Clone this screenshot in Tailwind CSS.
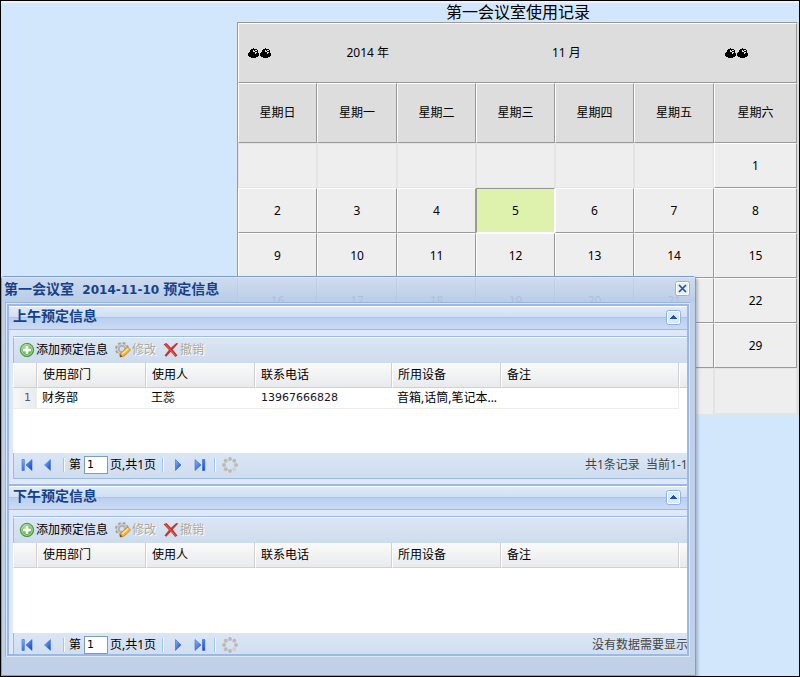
<!DOCTYPE html>
<html lang="zh-CN">
<head>
<meta charset="utf-8">
<title>第一会议室使用记录</title>
<script src="https://cdn.jsdelivr.net/npm/@tailwindcss/browser@4"></script>
</head>
<body class="min-h-screen bg-black p-px text-[12px] leading-[16px] text-black font-['Noto_Sans','Noto_Sans_CJK_SC',sans-serif]">
<svg width="0" height="0" class="absolute" aria-hidden="true">
  <defs>
    <linearGradient id="arrow" x1="0" y1="0" x2="1" y2="1"><stop offset="0" stop-color="#8fb8ff"/><stop offset="1" stop-color="#0a3fc4"/></linearGradient>
    <radialGradient id="green" cx=".4" cy=".3" r=".8"><stop offset="0" stop-color="#a5dd8c"/><stop offset="1" stop-color="#3c9a2e"/></radialGradient>
    <symbol id="bag" viewBox="0 0 11 10"><path d="M5 0h1v1h3v1h1v3h1v3h-1v1H8v1H3V9H1V8H0V5h1V4h1V2h1V1h2z"/><path d="M5 2h1v1H5zM7 2h2v1H7zM5 3h2v1H5zM7 4h2v1H7zM7 5h1v1H7z" fill="#ddd"/></symbol>
    <symbol id="add" viewBox="0 0 16 16"><circle cx="8" cy="8" r="6.7" fill="url(#green)" stroke="#4d9a44"/><circle cx="8" cy="8" r="5.3" fill="none" stroke="#b9e2ab" stroke-width=".8"/><path d="M6.700 4h2.600v2.700H12v2.600H9.300V12H6.700V9.300H4V6.700h2.700z" fill="#fff"/></symbol>
    <symbol id="edit" viewBox="0 0 16 16"><circle cx="7" cy="7" r="6" fill="none" stroke="#a2a29e" stroke-width="2" stroke-dasharray="2.700 2.010"/><circle cx="7" cy="7" r="3.900" fill="none" stroke="#b0b0ac" stroke-width="3.200"/><circle cx="7" cy="7" r="4.500" fill="none" stroke="#d8d8d3" stroke-width="1"/><path d="M5 15l.8-4.200 6.700-5.800 3.100 3.100-6.600 6z" fill="#f4b43e" stroke="#c9822b" stroke-width=".8"/><path d="M7.300 11.800l6-5.200" stroke="#ffe6a1" stroke-width="1.300"/><path d="M5 15l.5-2.400 1.900 1.800z" fill="#6b431d"/></symbol>
    <symbol id="cancel" viewBox="0 0 16 16"><path d="M.5 2.200L3.500 1 8 5.700 13.300 1l2 .4L9.700 7.500l4.800 6-2.200 1.500L7.800 9.800l-4.500 5L1.500 13.500 5.900 8z" fill="#cb3426"/><path d="M2.500 2.500l9.800 11" stroke="#e76b58" stroke-width=".9"/></symbol>
    <symbol id="prev" viewBox="0 0 16 16"><path d="M10.500 2.500v11L4.500 8z" fill="url(#arrow)" stroke="#4a79e0" stroke-width=".6"/></symbol>
    <symbol id="first" viewBox="0 0 16 16"><path d="M3 2.500h2.300v11H3zM13 2.500v11L7 8z" fill="url(#arrow)" stroke="#2f66d8" stroke-width=".6"/></symbol>
    <symbol id="next" viewBox="0 0 16 16"><path d="M5.500 2.500v11l5.500-5.500z" fill="url(#arrow)" stroke="#2f66d8" stroke-width=".6"/></symbol>
    <symbol id="last" viewBox="0 0 16 16"><path d="M10.500 2.500h2.300v11h-2.300zM3 2.500v11L9 8z" fill="url(#arrow)" stroke="#2f66d8" stroke-width=".6"/></symbol>
    <symbol id="refresh" viewBox="0 0 16 16"><g fill="#bdbbb6"><circle cx="8" cy="2" r="2"/><circle cx="12.300" cy="3.700" r="2"/><circle cx="14" cy="8" r="2"/><circle cx="12.300" cy="12.300" r="2" fill="#d2cfc9"/><circle cx="8" cy="14" r="2"/><circle cx="3.700" cy="12.300" r="2"/><circle cx="2" cy="8" r="2"/><circle cx="3.700" cy="3.700" r="2"/></g></symbol>
    <symbol id="up" viewBox="0 0 15 15"><rect x=".5" y=".5" width="14" height="14" rx="2" fill="#fff" stroke="#8db2e3"/><rect x="2" y="2" width="11" height="11" fill="#d9ebfb"/><path d="M4 9V8h1V7h1V6h1V5h1v1h1v1h1v1h1v1z" fill="#234eac"/></symbol>
    <symbol id="close" viewBox="0 0 15 15"><rect x=".5" y=".5" width="14" height="14" rx="2" fill="#fff" stroke="#8db2e3"/><rect x="2" y="2" width="11" height="11" fill="#e3effb"/><path d="M4 4l7 7M11 4l-7 7" stroke="#2c4fa3" stroke-width="1.700"/></symbol>
  </defs>
</svg>
<main class="relative min-h-[675px] overflow-hidden border-t-2 border-[#eef0fb] bg-[#d3e7fc]">
  <section class="ml-[236px]">
    <h1 class="h-[19px] text-center text-[16px] leading-[18px]">第一会议室使用记录</h1>
    <div class="border-r-2 border-[#dedede]">
    <table class="w-full table-fixed border-separate border-spacing-0 border-l border-t border-[#999] bg-[#eee] text-center [&_td]:border [&_td]:border-t-white [&_td]:border-l-white [&_td]:border-r-[#999] [&_td]:border-b-[#999] [&_td]:p-0 [&_th]:border [&_th]:border-t-white [&_th]:border-l-white [&_th]:border-r-[#999] [&_th]:border-b-[#999] [&_th]:bg-[#ddd] [&_th]:p-0 [&_th]:font-normal">
      <colgroup><col class="w-[79px]"><col class="w-[80px]"><col class="w-[79px]"><col class="w-[79px]"><col class="w-[79px]"><col class="w-[80px]"><col class="w-[83px]"></colgroup>
      <thead>
        <tr class="h-[60px]"><th colspan="7"><div class="grid grid-cols-[41fr_176fr_222fr_119fr] items-center">
          <button class="flex justify-center gap-px" aria-label="上一年"><svg width="11" height="10" shape-rendering="crispEdges"><use href="#bag"/></svg><svg width="11" height="10" shape-rendering="crispEdges"><use href="#bag"/></svg></button>
          <span>2014 年</span><span>11 月</span>
          <button class="flex justify-center gap-px" aria-label="下一月"><svg width="11" height="10" shape-rendering="crispEdges"><use href="#bag"/></svg><svg width="11" height="10" shape-rendering="crispEdges"><use href="#bag"/></svg></button>
        </div></th></tr>
        <tr class="h-[60px]"><th>星期日</th><th>星期一</th><th>星期二</th><th>星期三</th><th>星期四</th><th>星期五</th><th>星期六</th></tr>
      </thead>
      <tbody>
        <tr class="h-[45px]"><td class="border-[#e2e4e6]!"></td><td class="border-[#e2e4e6]!"></td><td class="border-[#e2e4e6]!"></td><td class="border-[#e2e4e6]!"></td><td class="border-[#e2e4e6]!"></td><td class="border-[#e2e4e6]!"></td><td>1</td></tr>
        <tr class="h-[45px]"><td>2</td><td>3</td><td>4</td><td class="border-t-[#999]! border-l-[#999]! border-r-white! border-b-white! bg-[#dff2ad]">5</td><td>6</td><td>7</td><td>8</td></tr>
        <tr class="h-[45px]"><td>9</td><td>10</td><td>11</td><td>12</td><td>13</td><td>14</td><td>15</td></tr>
        <tr class="h-[45px]"><td>16</td><td>17</td><td>18</td><td>19</td><td>20</td><td>21</td><td>22</td></tr>
        <tr class="h-[45px]"><td></td><td></td><td></td><td></td><td></td><td></td><td>29</td></tr>
        <tr class="h-[47px]"><td></td><td class="border-[#e2e4e6]!"></td><td class="border-[#e2e4e6]!"></td><td class="border-[#e2e4e6]!"></td><td class="border-[#e2e4e6]!"></td><td class="border-[#e2e4e6]!"></td><td class="border-[#e2e4e6]! border-b-2!"></td></tr>
      </tbody>
    </table>
    </div>
  </section>

  <section class="absolute top-[273px] left-0 w-[695px] rounded-t-[3px] border border-[#7d9fc8] shadow-[2px_2px_3px_rgba(90,110,140,0.4)]" aria-labelledby="win-title">
    <header class="flex h-[25px] items-start justify-between bg-linear-to-b from-[#cbd9ee]/85 to-[#b7cbe5]/95 pt-[4px] pr-[5px] pl-[2px] shadow-[inset_0_1px_0_#dbe6f4]">
      <h2 id="win-title" class="text-[14px] leading-[16px] font-bold whitespace-pre text-[#15428b]">第一会议室<span class="font-['DejaVu_Sans'] text-[12px]">  2014-11-10 </span>预定信息</h2>
      <button aria-label="关闭"><svg width="15" height="15"><use href="#close"/></svg></button>
    </header>
    <div class="bg-[#bfd0e7] pr-[5px] pb-[18px] pl-[3px]">
      <div class="border-t border-l border-[#99b5e8] bg-[#d6e3f5]">
      <div class="border border-[#dce7f8]">
      <div class="h-[352px] overflow-hidden border-2 border-[#9ab9e8] bg-[#dfe8f6]">

        <section>
          <header class="flex h-[24px] items-start justify-between border-t border-b border-t-white border-b-[#99bbe8] bg-[linear-gradient(#dfeaf8,#cfdff4_10px,#a9c6ea_10px,#a9c6ea_11px,#b9cff0_11px,#cbdbf4)] pt-[3px] pr-[6px] pl-[4px]">
            <h3 class="text-[14px] leading-[12px] font-bold text-[#15428b]">上午预定信息</h3>
            <button aria-label="折叠"><svg width="15" height="15"><use href="#up"/></svg></button>
          </header>
          <div class="pt-[6px] pb-[5px] pl-[4px]">
            <div class="border-t border-b border-[#99bbe8] bg-white">
              <div class="flex h-[26px] items-center border-t border-l border-t-white border-l-[#99bbe8] bg-linear-to-b from-[#dbe6f5] to-[#cddced] pb-[2px] pl-[5px]">
                <button class="flex h-[22px] items-center gap-px"><svg width="16" height="16"><use href="#add"/></svg>添加预定信息</button>
                <button disabled class="ml-[7px] flex h-[22px] items-center gap-px text-[#aca899] [text-shadow:1px_1px_0_#fff]"><svg width="16" height="16"><use href="#edit"/></svg>修改</button>
                <button disabled class="ml-[7px] flex h-[22px] items-center gap-px text-[#aca899] [text-shadow:1px_1px_0_#fff]"><svg width="16" height="16"><use href="#cancel"/></svg>撤销</button>
              </div>
              <div class="h-[90px]">
                <table class="w-full table-fixed border-separate border-spacing-0 text-left [&_td]:overflow-hidden [&_td]:py-0 [&_td]:pl-[5px] [&_td]:whitespace-nowrap [&_th]:border-r [&_th]:border-b [&_th]:border-l [&_th]:border-[#d0d0d0] [&_th]:border-l-white [&_th]:bg-linear-to-b [&_th]:from-[#fafafa] [&_th]:to-[#e9eaec] [&_th]:py-0 [&_th]:pr-0 [&_th]:pl-[5px] [&_th]:font-normal">
                  <colgroup><col class="w-[24px]"><col class="w-[109px]"><col class="w-[109px]"><col class="w-[137px]"><col class="w-[109px]"><col class="w-[178px]"><col></colgroup>
                  <thead><tr class="h-[25px]"><th></th><th>使用部门</th><th>使用人</th><th>联系电话</th><th>所用设备</th><th>备注</th><th class="border-r-0!"></th></tr></thead>
                  <tbody><tr class="h-[21px] leading-[18px] [&_td]:border-b [&_td]:border-[#ededed]"><td class="border-r bg-linear-to-r from-[#f8f8f8] to-[#e9eaec] pr-[5px] text-right font-['DejaVu_Sans'] text-[11px] text-[#5b5584]">1</td><td>财务部</td><td>王蕊</td><td class="pl-[6px]! font-['DejaVu_Sans'] text-[11px] text-[#14142e]">13967666828</td><td>音箱,话筒,笔记本...</td><td class="border-r"></td><td class="border-b-0!"></td></tr></tbody>
                </table>
              </div>
              <div class="flex h-[25px] items-center border-l border-[#99bbe8] bg-linear-to-b from-[#dae6f4] to-[#cfddef] pb-[2px] pl-[5px]">
                <button aria-label="第一页"><svg width="16" height="16"><use href="#first"/></svg></button>
                <button aria-label="上一页" class="ml-[5px]"><svg width="16" height="16"><use href="#prev"/></svg></button>
                <span class="ml-[7px] h-[14px] w-[2px] border-l border-[#98c8ff] bg-white"></span>
                <label for="page-am" class="ml-[4px]">第</label>
                <input id="page-am" value="1" class="ml-[3px] h-[18px] w-[24px] border border-[#7f9db9] bg-white pl-[2px] font-['DejaVu_Sans'] text-[11px]">
                <span class="ml-[2px] w-[47px] whitespace-nowrap">页,共1页</span>
                <span class="ml-[5px] h-[14px] w-[2px] border-l border-[#98c8ff] bg-white"></span>
                <button aria-label="下一页" class="ml-[6px]"><svg width="16" height="16"><use href="#next"/></svg></button>
                <button aria-label="最后一页" class="ml-[6px]"><svg width="16" height="16"><use href="#last"/></svg></button>
                <span class="ml-[6px] h-[14px] w-[2px] border-l border-[#98c8ff] bg-white"></span>
                <button aria-label="刷新" class="ml-[6px]"><svg width="16" height="16"><use href="#refresh"/></svg></button>
                <span class="ml-auto w-[102px] overflow-hidden whitespace-pre text-[#444]">共1条记录  当前1-1</span>
              </div>
            </div>
          </div>
        </section>

        <section class="border-t-2 border-[#9ab9e8]">
          <header class="flex h-[24px] items-start justify-between border-t border-b border-t-white border-b-[#99bbe8] bg-[linear-gradient(#dfeaf8,#cfdff4_10px,#a9c6ea_10px,#a9c6ea_11px,#b9cff0_11px,#cbdbf4)] pt-[3px] pr-[6px] pl-[4px]">
            <h3 class="text-[14px] leading-[12px] font-bold text-[#15428b]">下午预定信息</h3>
            <button aria-label="折叠"><svg width="15" height="15"><use href="#up"/></svg></button>
          </header>
          <div class="pt-[6px] pl-[4px]">
            <div class="border-t border-b border-[#99bbe8] bg-white">
              <div class="flex h-[26px] items-center border-t border-l border-t-white border-l-[#99bbe8] bg-linear-to-b from-[#dbe6f5] to-[#cddced] pb-[2px] pl-[5px]">
                <button class="flex h-[22px] items-center gap-px"><svg width="16" height="16"><use href="#add"/></svg>添加预定信息</button>
                <button disabled class="ml-[7px] flex h-[22px] items-center gap-px text-[#aca899] [text-shadow:1px_1px_0_#fff]"><svg width="16" height="16"><use href="#edit"/></svg>修改</button>
                <button disabled class="ml-[7px] flex h-[22px] items-center gap-px text-[#aca899] [text-shadow:1px_1px_0_#fff]"><svg width="16" height="16"><use href="#cancel"/></svg>撤销</button>
              </div>
              <div class="h-[90px]">
                <table class="w-full table-fixed border-separate border-spacing-0 text-left [&_th]:border-r [&_th]:border-b [&_th]:border-l [&_th]:border-[#d0d0d0] [&_th]:border-l-white [&_th]:bg-linear-to-b [&_th]:from-[#fafafa] [&_th]:to-[#e9eaec] [&_th]:py-0 [&_th]:pr-0 [&_th]:pl-[5px] [&_th]:font-normal">
                  <colgroup><col class="w-[24px]"><col class="w-[109px]"><col class="w-[109px]"><col class="w-[137px]"><col class="w-[109px]"><col class="w-[178px]"><col></colgroup>
                  <thead><tr class="h-[25px]"><th></th><th>使用部门</th><th>使用人</th><th>联系电话</th><th>所用设备</th><th>备注</th><th class="border-r-0!"></th></tr></thead>
                </table>
              </div>
              <div class="flex h-[25px] items-center border-l border-[#99bbe8] bg-linear-to-b from-[#dae6f4] to-[#cfddef] pb-[2px] pl-[5px]">
                <button aria-label="第一页"><svg width="16" height="16"><use href="#first"/></svg></button>
                <button aria-label="上一页" class="ml-[5px]"><svg width="16" height="16"><use href="#prev"/></svg></button>
                <span class="ml-[7px] h-[14px] w-[2px] border-l border-[#98c8ff] bg-white"></span>
                <label for="page-pm" class="ml-[4px]">第</label>
                <input id="page-pm" value="1" class="ml-[3px] h-[18px] w-[24px] border border-[#7f9db9] bg-white pl-[2px] font-['DejaVu_Sans'] text-[11px]">
                <span class="ml-[2px] w-[47px] whitespace-nowrap">页,共1页</span>
                <span class="ml-[5px] h-[14px] w-[2px] border-l border-[#98c8ff] bg-white"></span>
                <button aria-label="下一页" class="ml-[6px]"><svg width="16" height="16"><use href="#next"/></svg></button>
                <button aria-label="最后一页" class="ml-[6px]"><svg width="16" height="16"><use href="#last"/></svg></button>
                <span class="ml-[6px] h-[14px] w-[2px] border-l border-[#98c8ff] bg-white"></span>
                <button aria-label="刷新" class="ml-[6px]"><svg width="16" height="16"><use href="#refresh"/></svg></button>
                <span class="ml-auto w-[95px] overflow-hidden whitespace-nowrap text-[#444]">没有数据需要显示</span>
              </div>
            </div>
          </div>
        </section>

      </div>
      </div>
      </div>
    </div>
  </section>
</main>
</body>
</html>
